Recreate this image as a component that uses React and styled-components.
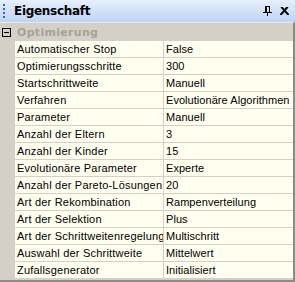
import React from "react";
import styled, { createGlobalStyle } from "styled-components";

const Global = createGlobalStyle`
  html, body { margin: 0; padding: 0; background: #d4d0c8; }
  body { width: 295px; height: 282px; overflow: hidden; font-family: "Liberation Sans", Arial, sans-serif; }
`;

const Panel = styled.div`
  width: 295px;
  height: 282px;
  display: flex;
  flex-direction: column;
  background: #d4d0c8;
`;

const TitleBar = styled.div`
  height: 22px;
  flex: none;
  display: flex;
  align-items: center;
  background: linear-gradient(#e6f0fd, #c9dbf6 70%, #c0d4f3);
  padding-left: 3px;
  box-sizing: border-box;
`;

const Grip = styled.div`
  width: 2px;
  height: 14px;
  margin-right: 9px;
  background: repeating-linear-gradient(#3a66c8 0 2px, transparent 2px 4px);
`;

const Title = styled.div`
  flex: 1;
  font-family: "DejaVu Sans", Verdana, sans-serif;
  font-weight: bold;
  font-size: 12px;
  color: #000;
  letter-spacing: -0.3px;
`;

const TitleIcons = styled.div`
  display: flex;
  align-items: center;
  gap: 8px;
  padding-right: 6px;
`;

const Body = styled.div`
  flex: 1;
  display: flex;
  flex-direction: column;
  border-right: 2px solid #8e8b84;
  border-bottom: 2px solid #8e8b84;
  border-top: 1px solid #e8e6e0;
`;

const Category = styled.div`
  height: 18px;
  display: flex;
  align-items: center;
  background: #d4d0c8;
`;

const Toggle = styled.div`
  width: 7px;
  height: 7px;
  border: 1px solid #000;
  margin: 0 6px 0 2px;
  position: relative;
  &::after {
    content: "";
    position: absolute;
    left: 1px;
    right: 1px;
    top: 3px;
    height: 1px;
    background: #000;
  }
`;

const CategoryLabel = styled.div`
  font-family: "DejaVu Sans", Verdana, sans-serif;
  font-weight: bold;
  font-size: 11px;
  letter-spacing: 0.3px;
  color: #a5a29a;
`;

const Row = styled.div`
  display: grid;
  grid-template-columns: 15px 148px 1px 1fr;
  height: 17px;
`;

const Gutter = styled.div`
  background: #d4d0c8;
`;

const Cell = styled.div`
  background: #fffff0;
  border-bottom: 1px solid #d4d0c8;
  font-size: 11px;
  letter-spacing: ${(p) => (p.$value ? "0.05px" : "0.2px")};
  color: #000;
  line-height: 16px;
  padding-left: 2px;
  white-space: nowrap;
  overflow: hidden;
`;

const Divider = styled.div`
  background: #d4d0c8;
`;

const rows = [
  ["Automatischer Stop", "False"],
  ["Optimierungsschritte", "300"],
  ["Startschrittweite", "Manuell"],
  ["Verfahren", "Evolutionäre Algorithmen"],
  ["Parameter", "Manuell"],
  ["Anzahl der Eltern", "3"],
  ["Anzahl der Kinder", "15"],
  ["Evolutionäre Parameter", "Experte"],
  ["Anzahl der Pareto-Lösungen", "20"],
  ["Art der Rekombination", "Rampenverteilung"],
  ["Art der Selektion", "Plus"],
  ["Art der Schrittweitenregelung", "Multischritt"],
  ["Auswahl der Schrittweite", "Mittelwert"],
  ["Zufallsgenerator", "Initialisiert"],
];

export default function App() {
  return (
    <>
      <Global />
      <Panel>
        <TitleBar>
          <Grip />
          <Title>Eigenschaft</Title>
          <TitleIcons>
            <svg width="9" height="10" viewBox="0 0 9 10">
              <path d="M2 0h5M2 0v6M3 0v6M6 0v6M0 6h9M4.5 6v4" stroke="#000" strokeWidth="1" fill="none" shapeRendering="crispEdges" />
            </svg>
            <svg width="9" height="8" viewBox="0 0 9 8">
              <path d="M1 0L8 8M8 0L1 8M2 0L9 8M7 0L0 8" stroke="#000" strokeWidth="1.2" fill="none" />
            </svg>
          </TitleIcons>
        </TitleBar>
        <Body>
          <Category>
            <Toggle />
            <CategoryLabel>Optimierung</CategoryLabel>
          </Category>
          {rows.map(([k, v]) => (
            <Row key={k}>
              <Gutter />
              <Cell>{k}</Cell>
              <Divider />
              <Cell $value>{v}</Cell>
            </Row>
          ))}
        </Body>
      </Panel>
    </>
  );
}
